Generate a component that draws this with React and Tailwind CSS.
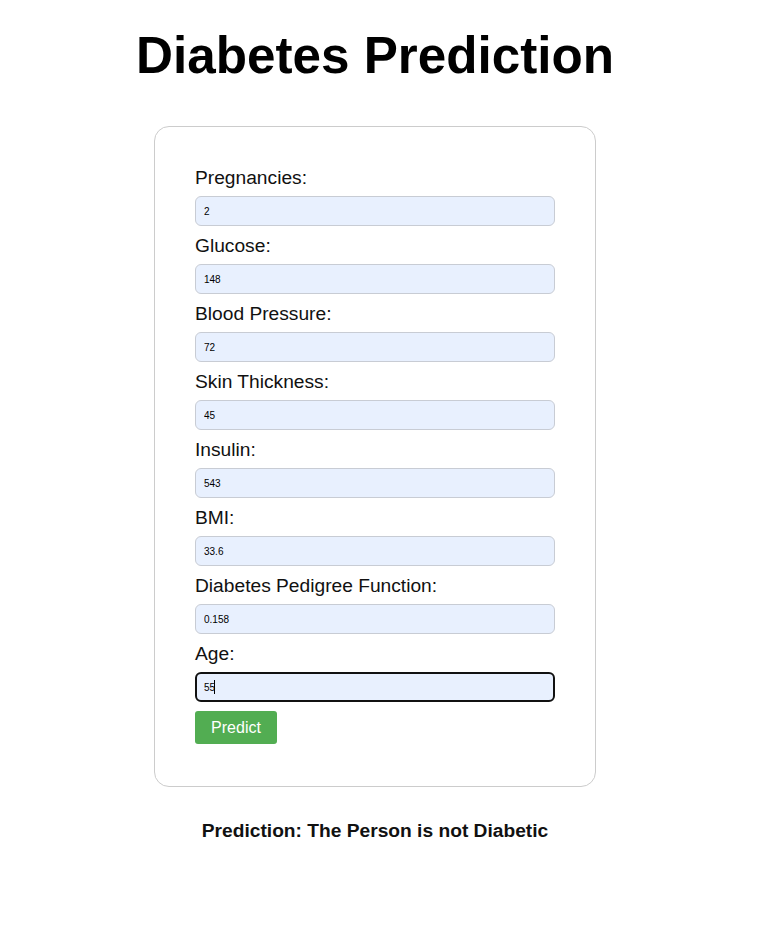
const fields = [
  { label: "Pregnancies:", value: "2" },
  { label: "Glucose:", value: "148" },
  { label: "Blood Pressure:", value: "72" },
  { label: "Skin Thickness:", value: "45" },
  { label: "Insulin:", value: "543" },
  { label: "BMI:", value: "33.6" },
  { label: "Diabetes Pedigree Function:", value: "0.158" },
  { label: "Age:", value: "55", focused: true },
]

const App = () => {
  return (
    <div className="w-[750px] min-h-[934px] bg-white font-['Liberation_Sans',Arial,sans-serif] text-black flex flex-col items-center">
      <h1 className="mt-[26px] text-[51.2px] font-bold leading-[59px]">Diabetes Prediction</h1>

      <form className="mt-[41px] w-[442px] border border-[#cccccc] rounded-[15px] px-[40px] pt-[40px] pb-[42px]">
        {fields.map((f) => (
          <div key={f.label}>
            <label className="block text-[19.2px] leading-[21px] text-[#111]">{f.label}</label>
            <div className="relative mt-[8px] mb-[9px]">
              <input
                type="text"
                defaultValue={f.value}
                readOnly
                className={
                  f.focused
                    ? "block w-full h-[30px] rounded-[6px] border-2 border-[#111] bg-[#e8f0fe] px-[7px] text-[10px] text-black outline-none"
                    : "block w-full h-[30px] rounded-[6px] border border-[#c8ccd4] bg-[#e8f0fe] px-[8px] text-[10px] text-black outline-none"
                }
              />
              {f.focused && (
                <span className="absolute left-[19px] top-[8px] w-px h-[14px] bg-black" />
              )}
            </div>
          </div>
        ))}
        <button
          type="button"
          className="block w-[82px] h-[33px] rounded-[3px] bg-[#52ad52] text-white text-[16px] leading-none"
        >
          Predict
        </button>
      </form>

      <p className="mt-[33px] text-[19.2px] leading-[22px] font-bold text-[#111]">
        Prediction: The Person is not Diabetic
      </p>
    </div>
  )
}

export default App
